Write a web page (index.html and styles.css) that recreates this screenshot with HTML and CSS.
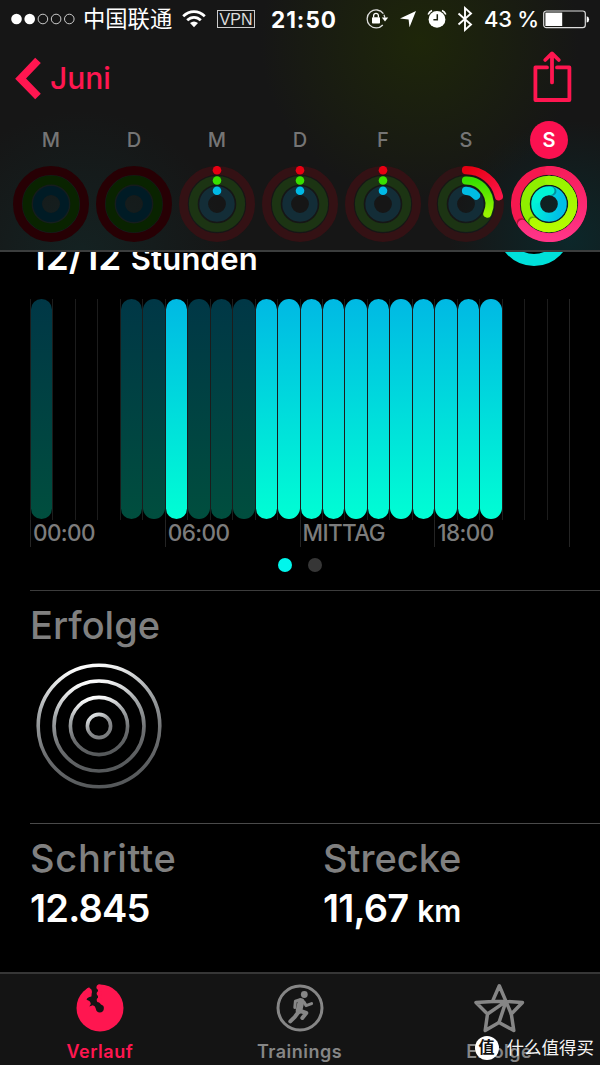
FILE: index.html
```
<!DOCTYPE html>
<html lang="de">
    <head>
        <meta charset="UTF-8" />
        <meta name="viewport" content="width=device-width, initial-scale=1.0" />
        <title>Aktivität</title>
        <link rel="stylesheet" href="styles.css">
    </head>
    <body>
        <!-- Shared gradients and ring shapes -->
        <svg class="defs" width="0" height="0">
            <defs>
                <linearGradient id="move" x1="0" y1="0" x2="1" y2="1">
                    <stop offset="0" stop-color="#e60012" />
                    <stop offset="1" stop-color="#fb1548" />
                </linearGradient>
                <linearGradient id="exercise" x1="0" y1="0" x2="0" y2="1">
                    <stop offset="0" stop-color="#38df00" />
                    <stop offset="1" stop-color="#98f400" />
                </linearGradient>
                <linearGradient id="move-full" x1="0" y1="0" x2="0" y2="1">
                    <stop offset="0" stop-color="#f71d5b" />
                    <stop offset="1" stop-color="#ff3487" />
                </linearGradient>
                <linearGradient id="exercise-full" x1="0" y1="0" x2="0" y2="1">
                    <stop offset="0" stop-color="#98f400" />
                    <stop offset="1" stop-color="#b4fc00" />
                </linearGradient>
                <linearGradient id="stand-full" x1="1" y1="0.2" x2="0" y2="0">
                    <stop offset="0" stop-color="#00bfe6" />
                    <stop offset="1" stop-color="#00f2d8" />
                </linearGradient>
                <linearGradient id="metal" x1="0.4" y1="0" x2="0.6" y2="1">
                    <stop offset="0" stop-color="#ffffff" />
                    <stop offset="0.3" stop-color="#a4a8aa" />
                    <stop offset="0.65" stop-color="#6c6e70" />
                    <stop offset="1" stop-color="#55585a" />
                </linearGradient>
                <linearGradient id="metal-inner" x1="0.2" y1="0" x2="0.8" y2="1">
                    <stop offset="0" stop-color="#e4e8ea" />
                    <stop offset="0.5" stop-color="#8c8e90" />
                    <stop offset="1" stop-color="#77797b" />
                </linearGradient>
                <symbol id="rings-start" viewBox="0 0 76 76">
                    <g fill="none" stroke-width="8.8">
                        <circle cx="38" cy="38" r="33.6" stroke="#341114" />
                        <circle cx="38" cy="38" r="23.7" stroke="#1c3413" />
                        <circle cx="38" cy="38" r="13.3" stroke="#132d37" />
                    </g>
                    <circle cx="38" cy="4.2" r="4.3" fill="#e60012" />
                    <circle cx="38" cy="14.5" r="4.3" fill="#38df00" />
                    <circle cx="38" cy="24.8" r="4.3" fill="#00b9e6" />
                </symbol>
                <symbol id="rings-empty" viewBox="0 0 76 76">
                    <g fill="none" stroke-width="9">
                        <circle cx="38" cy="38" r="33.5" stroke="#270004" />
                        <circle cx="38" cy="38" r="23.9" stroke="#092300" />
                        <circle cx="38" cy="38" r="13.5" stroke="#001b25" />
                    </g>
                </symbol>
            </defs>
        </svg>

        <header class="header">
            <div class="status-bar">
                <svg class="signal" width="60" height="12" viewBox="0 0 60 12">
                    <circle cx="5.5" cy="6" r="5.3" fill="#fff" />
                    <circle cx="18.7" cy="6" r="5.3" fill="#fff" />
                    <g fill="none" stroke="#ccc" stroke-width="1">
                        <circle cx="31.9" cy="6" r="4.8" />
                        <circle cx="45.1" cy="6" r="4.8" />
                        <circle cx="58.3" cy="6" r="4.8" />
                    </g>
                </svg>
                <span class="carrier">中国联通</span>
                <svg class="wifi" width="24" height="18" viewBox="0 0 24 18">
                    <g fill="none" stroke="#fff" stroke-width="2.7">
                        <path d="M1.2 6.3Q6 1.6 12 1.6t10.8 4.7" />
                        <path d="M5.2 10.3Q8.2 7.3 12 7.3t6.8 3" />
                    </g>
                    <path d="M12 17.3l-4-4.2q4-3 8 0z" fill="#fff" />
                </svg>
                <span class="vpn">VPN</span>
                <span class="clock">21:50</span>
                <svg class="lock" width="23" height="20" viewBox="0 0 23 20">
                    <path d="M17.4 4.6A9 9 0 1 0 16.8 16M18.8 8.6q-.2-1.6-.9-2.9" fill="none" stroke="#ddd" stroke-width="1.3" />
                    <path d="M15.8 8.6h6.4L19 12.4z" fill="#fff" />
                    <rect x="6" y="8.3" width="8" height="6.2" rx="0.8" fill="#fff" />
                    <path d="M7.6 8.5V6.7a2.4 2.4 0 0 1 4.8 0v1.8" fill="none" stroke="#fff" stroke-width="1.3" />
                </svg>
                <svg class="location" width="18" height="18" viewBox="0 0 18 18">
                    <path d="M17 1L10.5 17.2 9.6 9.4 1 8.6z" fill="#fff" />
                </svg>
                <svg class="alarm" width="20" height="20" viewBox="0 0 20 20">
                    <circle cx="10" cy="10.4" r="8.4" fill="#fff" />
                    <path d="M10.3 5.2v5.5H6.4" fill="none" stroke="#1b2110" stroke-width="1.5" />
                    <path d="M1.2 5.4Q2.2 2.6 5 1.4M18.8 5.4Q17.8 2.6 15 1.4" fill="none" stroke="#fff" stroke-width="1.6" />
                </svg>
                <svg class="bluetooth" width="16" height="26" viewBox="0 0 16 26">
                    <path d="M1.5 7.5l12.5 11-6 5.4V2.1l6 5.4-12.5 11" fill="none" stroke="#fff" stroke-width="1.9" />
                </svg>
                <span class="percent">43 %</span>
                <svg class="battery" width="47" height="19" viewBox="0 0 47 19">
                    <rect x="0.7" y="1" width="41.6" height="16.6" rx="2.6" fill="none" stroke="#ddd" stroke-width="1.2" />
                    <rect x="2.4" y="2.6" width="16.8" height="13.4" fill="#fff" />
                    <path d="M43.7 6.2q2.4.6 2.4 3.2t-2.4 3.2z" fill="#fff" />
                </svg>
            </div>

            <nav class="nav">
                <a class="back">
                    <svg width="28" height="44" viewBox="0 0 28 44">
                        <path d="M23 4.4L5.6 22.6l17.4 17.8" fill="none" stroke="currentColor" stroke-width="7.8" />
                    </svg>
                    <span>Juni</span>
                </a>
                <svg class="share" width="40" height="54" viewBox="0 0 40 54">
                    <g fill="none" stroke="currentColor" stroke-width="3.8" stroke-linejoin="round" stroke-linecap="round">
                        <path d="M15 17.4H3.4V50h34V17.4H25" />
                        <path d="M20 32.4V4M13.2 10L20 3.4l6.8 6.6" />
                    </g>
                </svg>
            </nav>

            <div class="week">
                <div class="day">
                    <span class="letter">M</span>
                    <svg class="rings"><use href="#rings-empty" /></svg>
                </div>
                <div class="day">
                    <span class="letter">D</span>
                    <svg class="rings"><use href="#rings-empty" /></svg>
                </div>
                <div class="day">
                    <span class="letter">M</span>
                    <svg class="rings"><use href="#rings-start" /></svg>
                </div>
                <div class="day">
                    <span class="letter">D</span>
                    <svg class="rings"><use href="#rings-start" /></svg>
                </div>
                <div class="day">
                    <span class="letter">F</span>
                    <svg class="rings"><use href="#rings-start" /></svg>
                </div>
                <div class="day">
                    <span class="letter">S</span>
                    <svg class="rings" viewBox="0 0 76 76">
                        <g fill="none" stroke-width="8.8">
                            <circle cx="38" cy="38" r="33.6" stroke="#301315" />
                            <circle cx="38" cy="38" r="23.7" stroke="#1c3413" />
                            <circle cx="38" cy="38" r="13.3" stroke="#132d37" />
                        </g>
                        <g fill="none" stroke-width="8.2" stroke-linecap="round">
                            <path d="M38 4.2A33.8 33.8 0 0 1 70.9 30.3" stroke="url(#move)" />
                            <path d="M38 14.5A23.5 23.5 0 0 1 59.4 47.6" stroke="url(#exercise)" />
                            <path d="M38 24.8A13.2 13.2 0 0 1 48 29.6" stroke="#00bce4" />
                        </g>
                    </svg>
                </div>
                <div class="day">
                    <span class="letter selected">S</span>
                    <svg class="rings" viewBox="0 0 76 76">
                        <g fill="none" stroke-width="8.9">
                            <circle cx="38" cy="38" r="33.6" stroke="#f5184f" />
                            <circle cx="38" cy="38" r="23.7" stroke="#8fee00" />
                            <circle cx="38" cy="38" r="13.3" stroke="url(#stand-full)" />
                        </g>
                        <g fill="none" stroke-linecap="round">
                            <g stroke="#000" stroke-opacity="0.3" stroke-width="8.9">
                                <path d="M13 60.4A33.6 33.6 0 0 1 10.3 56.6" />
                                <path d="M24 57.2A23.7 23.7 0 0 1 21.4 55" />
                                <path d="M38 24.7A13.3 13.3 0 0 1 41 25.2" />
                            </g>
                            <path d="M38 4.4A33.6 33.6 0 1 1 11.2 58.2" stroke="url(#move-full)" stroke-width="8.9" />
                            <path d="M38 14.3A23.7 23.7 0 1 1 22.8 56.2" stroke="url(#exercise-full)" stroke-width="8.9" />
                            <path d="M25.6 33A13.3 13.3 0 0 1 39.2 24.8" stroke="#00f4d6" stroke-width="8.6" />
                        </g>
                    </svg>
                </div>
            </div>
        </header>

        <main class="content">
            <section class="stand">
                <div class="summary">
                    <div class="goal">12/12 <small>Stunden</small></div>
                    <svg width="74" height="74" viewBox="0 0 74 74">
                        <circle cx="37" cy="37" r="31" fill="none" stroke="#00e0da" stroke-width="12" />
                    </svg>
                </div>
                <div class="chart">
                    <div class="hour idle"></div>
                    <div class="hour"></div>
                    <div class="hour"></div>
                    <div class="hour"></div>
                    <div class="hour idle"></div>
                    <div class="hour idle"></div>
                    <div class="hour stood"></div>
                    <div class="hour idle"></div>
                    <div class="hour idle"></div>
                    <div class="hour idle"></div>
                    <div class="hour stood"></div>
                    <div class="hour stood"></div>
                    <div class="hour stood"></div>
                    <div class="hour stood"></div>
                    <div class="hour stood"></div>
                    <div class="hour stood"></div>
                    <div class="hour stood"></div>
                    <div class="hour stood"></div>
                    <div class="hour stood"></div>
                    <div class="hour stood"></div>
                    <div class="hour stood"></div>
                    <div class="hour"></div>
                    <div class="hour"></div>
                    <div class="hour"></div>
                </div>
                <div class="axis">
                    <span>00:00</span>
                    <span>06:00</span>
                    <span>MITTAG</span>
                    <span>18:00</span>
                </div>
                <div class="pager">
                    <span class="dot active"></span>
                    <span class="dot"></span>
                </div>
            </section>

            <section class="awards">
                <h2>Erfolge</h2>
                <svg class="badge" width="126" height="126" viewBox="0 0 126 126">
                    <g fill="none" stroke="url(#metal)" stroke-width="3.6">
                        <circle cx="63" cy="63" r="60.8" />
                        <circle cx="63" cy="63" r="45" />
                        <circle cx="63" cy="63" r="28.6" />
                        <circle cx="63" cy="63" r="11.6" stroke="url(#metal-inner)" />
                    </g>
                </svg>
            </section>

            <section class="totals">
                <div class="total">
                    <h2 class="steps">Schritte</h2>
                    <div class="value">12.845</div>
                </div>
                <div class="total">
                    <h2>Strecke</h2>
                    <div class="value">11,67 <small>km</small></div>
                </div>
            </section>
        </main>

        <footer class="tab-bar">
            <div class="tab active">
                <svg width="50" height="50" viewBox="0 0 50 50">
                    <circle cx="25" cy="25" r="23.5" fill="currentColor" />
                    <path d="M10 0H23V18L26 21.6A4 4 0 1 1 20.9 26Q20.5 23 17.8 22.3L14.3 23.4 15.8 21Q15.5 17.8 11.6 16.7 12 14.5 16.4 13.6L16.8 9 14 4 11 5z" fill="#141414" />
                    <g fill="currentColor">
                        <circle cx="13.7" cy="8.3" r="3.1" />
                        <circle cx="24.2" cy="4.2" r="2.7" />
                        <circle cx="24.2" cy="10.6" r="2.5" />
                        <circle cx="24.2" cy="17" r="2.5" />
                    </g>
                </svg>
                <span>Verlauf</span>
            </div>
            <div class="tab">
                <svg width="50" height="50" viewBox="0 0 50 50">
                    <circle cx="25" cy="25" r="22" fill="none" stroke="currentColor" stroke-width="3" />
                    <circle cx="29.3" cy="11.5" r="3.4" fill="currentColor" />
                    <g fill="none" stroke="currentColor" stroke-linecap="round" stroke-linejoin="round">
                        <path d="M26 18.5L24 27.5" stroke-width="6.6" />
                        <path d="M25 16.6L20.4 18.2 19.8 24.5M29 19l2 3.6 5.6-2" stroke-width="3" />
                        <path d="M25.5 28l5.8 2-4 5M23.5 29l-3.6 4.8-4.6 4.6" stroke-width="4" />
                    </g>
                </svg>
                <span>Trainings</span>
            </div>
            <div class="tab">
                <svg width="52" height="50" viewBox="0 0 52 50">
                    <g fill="none" stroke="currentColor" stroke-width="3.5" stroke-linejoin="round">
                        <path d="M26.3 2.8L33 18.4 49.5 19.5 38.3 31 40.8 47.5 26 39.5 12.2 47.5 14.5 31 3 19.5 19.5 18.4z" />
                        <path d="M19.5 18.4L33 18.4 14.5 31M33 18.4L26 39.5M33 18.4L38.3 31" />
                    </g>
                </svg>
                <span>Erfolge</span>
            </div>
            <div class="watermark">
                <span class="seal">值</span>
                <span>什么值得买</span>
            </div>
        </footer>
    </body>
</html>
```
FILE: styles.css
```
* {
    box-sizing: border-box;
}

body {
    margin: 0;
    width: 600px;
    height: 1065px;
    overflow: hidden;
    display: flex;
    flex-direction: column;
    background-color: #000;
    color: #fff;
    font-family: Inter, "Noto Sans CJK SC", sans-serif;
}

svg {
    display: block;
    flex-shrink: 0;
}

.defs {
    position: absolute;
}

/* Header */
.header {
    flex-shrink: 0;
    height: 252px;
    border-bottom: 2px solid #3b3d3d;
    background:
        radial-gradient(circle at 420px 40px, rgba(32, 42, 6, 0.8), transparent 160px),
        radial-gradient(circle at 80px 260px, rgba(18, 46, 46, 0.5), transparent 150px),
        radial-gradient(circle at 570px 240px, rgba(8, 46, 50, 0.7), transparent 120px),
        #161616;
}

.status-bar {
    display: flex;
    align-items: center;
    height: 38px;
    padding-left: 11px;
    white-space: nowrap;
}

.signal {
    overflow: visible;
}

.carrier {
    width: 98px;
    margin-left: 12px;
    font-size: 22.3px;
    line-height: 38px;
}

.wifi {
    margin-left: 1px;
}

.vpn {
    width: 38px;
    height: 18px;
    margin-left: 11px;
    border: 1px solid #ccc;
    font-family: "Liberation Sans", sans-serif;
    font-size: 16px;
    line-height: 17px;
    text-align: center;
    color: #ddd;
}

.clock {
    width: 95px;
    margin-left: 16px;
    font-size: 22.5px;
    font-weight: 700;
    letter-spacing: 1px;
}

.location {
    margin-left: 10px;
}

.alarm {
    margin-left: 10px;
}

.bluetooth {
    margin-left: 10px;
}

.percent {
    width: 59px;
    margin-left: 11px;
    font-size: 22px;
    font-weight: 500;
    letter-spacing: -0.3px;
}

.nav {
    display: flex;
    justify-content: space-between;
    height: 80px;
    padding: 12px 28px 0 15px;
    color: #ff1650;
}

.back {
    display: flex;
    align-items: center;
    gap: 7px;
    height: 56px;
    font-size: 30px;
    font-weight: 500;
}

.week {
    display: grid;
    grid-template-columns: repeat(7, 83px);
    padding-left: 9.5px;
}

.day {
    display: flex;
    flex-direction: column;
    align-items: center;
    gap: 7px;
    padding-top: 3px;
}

.letter {
    width: 38px;
    height: 38px;
    border-radius: 50%;
    line-height: 38px;
    text-align: center;
    font-size: 20px;
    font-weight: 500;
    color: #757575;
}

.letter.selected {
    background-color: #fb1150;
    color: #fff;
    font-weight: 600;
}

.rings {
    width: 76px;
    height: 76px;
}

/* Content, scrolled under the header */
.content {
    flex: 1;
    min-height: 0;
    overflow: hidden;
}

.stand {
    height: 398px;
    margin-top: -60px;
}

.summary {
    display: flex;
    justify-content: space-between;
    align-items: flex-start;
    height: 74px;
    padding: 0 29px 0 30px;
}

.goal {
    margin-top: 42px;
    font-size: 37px;
    font-weight: 600;
    line-height: 45px;
}

.goal small {
    font-size: 31px;
    letter-spacing: 0.2px;
}

.chart {
    display: grid;
    grid-template-columns: repeat(24, 1fr);
    width: 540px;
    height: 221px;
    margin: 33px 0 0 30px;
    border-right: 1px solid #242424;
}

.hour {
    border-left: 1px solid #1c1c1c;
}

.hour::before {
    content: "";
    display: block;
    height: 220px;
    border-radius: 11px;
}

.hour.idle::before {
    background: linear-gradient(#003746, #004e3e);
}

.hour.stood::before {
    background: linear-gradient(#00b9e4, #00fed4);
}

.axis {
    display: grid;
    grid-template-columns: repeat(4, 1fr);
    width: 540px;
    height: 27px;
    margin-left: 30px;
    border-right: 1px solid #242424;
    font-size: 22.5px;
    font-weight: 500;
    line-height: 26px;
    letter-spacing: -0.6px;
    color: #7c7c7c;
}

.axis span {
    padding-left: 2px;
    border-left: 1px solid #242424;
}

.pager {
    display: flex;
    justify-content: center;
    gap: 16px;
    padding-top: 11px;
}

.dot {
    width: 14px;
    height: 14px;
    border-radius: 50%;
    background-color: #363636;
}

.dot.active {
    background-color: #00f6ec;
}

h2 {
    margin: 0;
    font-size: 38px;
    font-weight: 500;
    line-height: 46px;
    color: #808080;
}

.awards {
    height: 233px;
    margin-left: 30px;
    padding-top: 11px;
    border-top: 1px solid #3c3c3c;
}

.badge {
    margin: 15px 0 0 6px;
}

.totals {
    display: grid;
    grid-template-columns: 293px 1fr;
    margin-left: 30px;
    padding-top: 11px;
    border-top: 1px solid #4a4a4a;
}

.steps {
    letter-spacing: 0.7px;
}

.value {
    font-size: 38px;
    font-weight: 600;
    line-height: 46px;
    padding-top: 4px;
    letter-spacing: -0.8px;
}

.value small {
    font-size: 30px;
    letter-spacing: 0;
}

/* Tab bar */
.tab-bar {
    position: relative;
    flex-shrink: 0;
    display: grid;
    grid-template-columns: repeat(3, 199.7px);
    height: 93px;
    border-top: 2px solid #363636;
    background-color: #141414;
}

.tab {
    display: flex;
    flex-direction: column;
    align-items: center;
    gap: 8px;
    padding-top: 9px;
    font-size: 18px;
    font-weight: 600;
    line-height: 22px;
    letter-spacing: 0.5px;
    color: #868686;
}

.tab.active {
    color: #ff1650;
}

.watermark {
    position: absolute;
    right: 6px;
    bottom: 4px;
    display: flex;
    align-items: center;
    gap: 8px;
    font-size: 17.5px;
    line-height: 26px;
    color: #f4f4f4;
}

.seal {
    width: 24px;
    height: 24px;
    border-radius: 50%;
    background-color: #fff;
    color: #111;
    font-size: 16px;
    font-weight: 700;
    line-height: 23px;
    text-align: center;
}
```
